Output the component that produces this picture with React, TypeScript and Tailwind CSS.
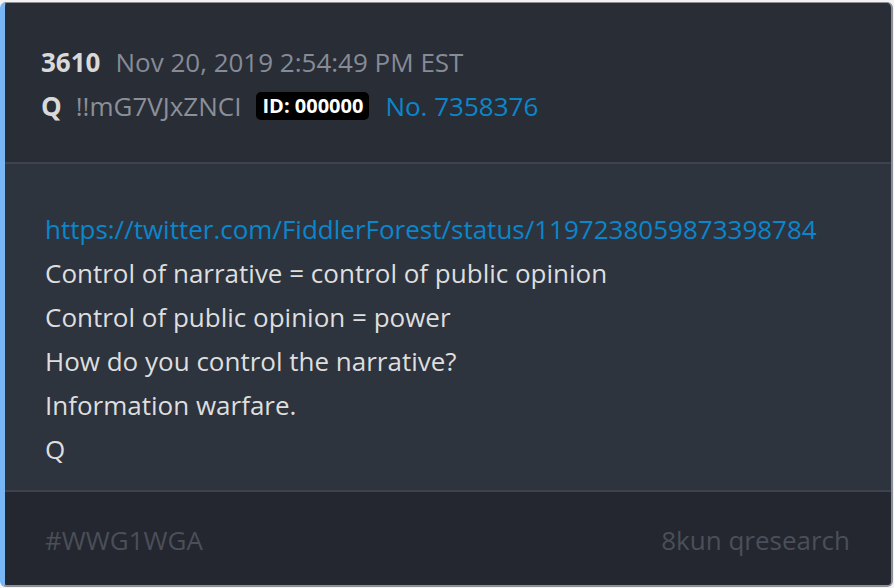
import React from "react";

const lines = [
  "Control of narrative = control of public opinion",
  "Control of public opinion = power",
  "How do you control the narrative?",
  "Information warfare.",
  "Q",
];

const App = () => {
  return (
    <div
      className="w-[894px] h-[588px] bg-[#f2f2f2] pt-[2px]"
      style={{ fontFamily: '"Open Sans", "Noto Sans", sans-serif' }}
    >
      <div className="w-[893px] h-[585px] flex flex-col rounded-md overflow-hidden border-t border-r-2 border-b-2 border-[#8b8f97] border-l-[5px] border-l-[#78b6f6] bg-[#292d36]">
        <div className="h-[161px] flex flex-col justify-center pl-[36px] pt-[3px] gap-[10px] border-b-2 border-[#3d424c]">
          <div className="flex items-center gap-[15px] h-[34px]">
            <span className="text-[26px] font-bold text-[#d9d9d9]">3610</span>
            <span className="text-[26px] text-[#868b96]">Nov 20, 2019 2:54:49 PM EST</span>
          </div>
          <div className="flex items-center h-[34px]">
            <span className="text-[26px] font-bold text-[#d9d9d9]">Q</span>
            <span className="text-[26px] text-[#8b8f98] ml-[14px]">!!mG7VJxZNCI</span>
            <span className="ml-[15px] bg-black text-white text-[20px] font-bold rounded-[5px] px-[6px] h-[28px] flex items-center">
              ID: 000000
            </span>
            <span className="ml-[16px] text-[26px] text-[#0a86cc]">No. 7358376</span>
          </div>
        </div>
        <div className="flex-1 bg-[#2e343e] pl-[40px] pt-[43px] border-b-2 border-[#3d424c] text-[26px] leading-[44px] text-[#dedede]">
          <div className="text-[#0a86cc]">https://twitter.com/FiddlerForest/status/1197238059873398784</div>
          {lines.map((l, i) => (
            <div key={i}>{l}</div>
          ))}
        </div>
        <div className="h-[93px] bg-[#24272f] flex items-center justify-between pl-[40px] pr-[41px] pt-[3px] text-[26px] text-[#4a4f59]">
          <span>#WWG1WGA</span>
          <span>8kun qresearch</span>
        </div>
      </div>
    </div>
  );
};

export default App;
